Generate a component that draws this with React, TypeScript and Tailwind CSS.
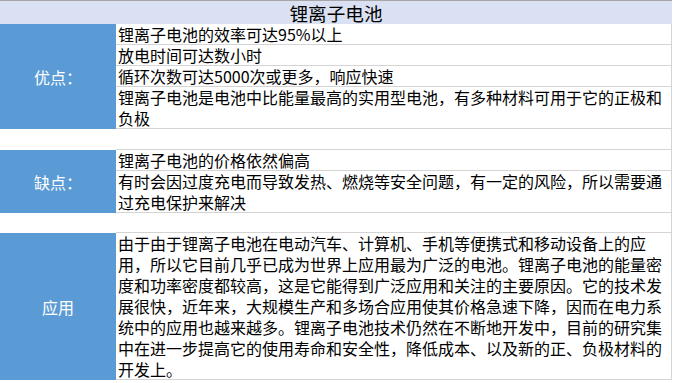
import React from "react";

const font = { fontFamily: '"Noto Sans CJK SC", "Noto Sans", sans-serif' };

function Row({ lines }: { lines: string[] }) {
  return (
    <div className="shadow-[inset_0_-1px_0_#d4d4d4] pl-[2px]">
      {lines.map((l, i) => (
        <div key={i} className="h-[21px] leading-[21px] whitespace-nowrap">
          {l}
        </div>
      ))}
    </div>
  );
}

function Section({ label, rows }: { label: string; rows: string[][] }) {
  return (
    <div className="flex">
      <div className="w-[116px] shrink-0 bg-[#5b9bd5] text-white flex items-center justify-center text-[16px]">
        {label}
      </div>
      <div className="flex-1 border-r border-[#d4d4d4] text-[16px] text-black">
        {rows.map((r, i) => (
          <Row key={i} lines={r} />
        ))}
      </div>
    </div>
  );
}

function Gap({ h }: { h: string }) {
  return (
    <div className={`flex ${h}`}>
      <div className="w-[116px] shrink-0 bg-white" />
      <div className="flex-1 border-r border-[#d4d4d4] shadow-[inset_0_-1px_0_#d4d4d4]" />
    </div>
  );
}

export default function App() {
  return (
    <div className="w-[674px] h-[383px] bg-white overflow-hidden" style={font}>
      <div className="w-[672px]">
        <div className="h-[24px] border-t border-[#a6a6a6] bg-[#d9e1f2] flex items-center justify-center text-[18.6px] leading-[23px] text-black">
          锂离子电池
        </div>
        <Section
          label="优点："
          rows={[
            ["锂离子电池的效率可达95%以上"],
            ["放电时间可达数小时"],
            ["循环次数可达5000次或更多，响应快速"],
            ["锂离子电池是电池中比能量最高的实用型电池，有多种材料可用于它的正极和", "负极"],
          ]}
        />
        <Gap h="h-[21px]" />
        <Section
          label="缺点："
          rows={[
            ["锂离子电池的价格依然偏高"],
            ["有时会因过度充电而导致发热、燃烧等安全问题，有一定的风险，所以需要通", "过充电保护来解决"],
          ]}
        />
        <Gap h="h-[20px]" />
        <Section
          label="应用"
          rows={[
            [
              "由于由于锂离子电池在电动汽车、计算机、手机等便携式和移动设备上的应",
              "用，所以它目前几乎已成为世界上应用最为广泛的电池。锂离子电池的能量密",
              "度和功率密度都较高，这是它能得到广泛应用和关注的主要原因。它的技术发",
              "展很快，近年来，大规模生产和多场合应用使其价格急速下降，因而在电力系",
              "统中的应用也越来越多。锂离子电池技术仍然在不断地开发中，目前的研究集",
              "中在进一步提高它的使用寿命和安全性，降低成本、以及新的正、负极材料的",
              "开发上。",
            ],
          ]}
        />
      </div>
    </div>
  );
}
